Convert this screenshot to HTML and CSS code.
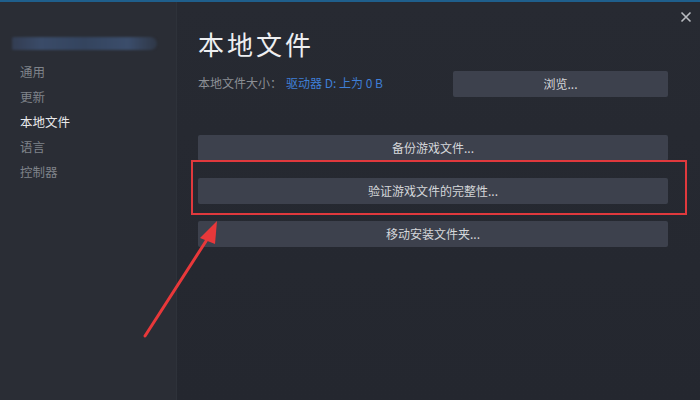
FILE: index.html
```html
<!DOCTYPE html>
<html>
<head>
<meta charset="utf-8">
<link rel="stylesheet" href="styles.css">
</head>
<body>
<div class="topline"></div>
<div class="window">
  <aside class="sidebar">
    <div class="blurbar"></div>
    <nav class="nav">
      <div class="nav-item">通用</div>
      <div class="nav-item">更新</div>
      <div class="nav-item active">本地文件</div>
      <div class="nav-item">语言</div>
      <div class="nav-item">控制器</div>
    </nav>
  </aside>
  <main class="main">
    <h1 class="title">本地文件</h1>
    <div class="size-row">
      <div class="size-text">本地文件大小：<span class="link">驱动器 D: 上为 0 B</span></div>
      <div class="btn browse">浏览...</div>
    </div>
    <div class="actions">
      <div class="btn">备份游戏文件...</div>
      <div class="highlight"><div class="btn">验证游戏文件的完整性...</div></div>
      <div class="btn">移动安装文件夹...</div>
    </div>
  </main>
  <div class="close">
    <svg width="12" height="12" viewBox="0 0 12 12"><path d="M1.5 1.5 L10.5 10.5 M10.5 1.5 L1.5 10.5" stroke="#b8bbc0" stroke-width="1.6" fill="none"/></svg>
  </div>
  <svg class="arrow" width="90" height="125" viewBox="0 0 90 125">
    <path d="M3 120 L66 22" stroke="#e8383a" stroke-width="3" stroke-linecap="round" fill="none"/>
    <path d="M75 5 L58 22 L73 28 Z" fill="#e8383a"/>
  </svg>
</div>
</body>
</html>
```

FILE: styles.css
```css
html, body {
  margin: 0;
  padding: 0;
  width: 700px;
  height: 400px;
  overflow: hidden;
  background: #252830;
  font-family: "Noto Sans CJK SC", "Noto Sans", sans-serif;
}
.topline {
  height: 2px;
  background: #1f5f8c;
}
.window {
  position: relative;
  display: flex;
  height: 398px;
}
.sidebar {
  width: 177px;
  background: #2a2d35;
  padding-top: 35px;
  box-sizing: border-box;
  border-right: 1px solid #2e323a;
}
.blurbar {
  margin-left: 12px;
  width: 145px;
  height: 13px;
  border-radius: 2px 7px 7px 2px;
  background: linear-gradient(90deg, #333d52 0%, #3a4b68 20%, #34445e 50%, #3b4d6b 80%, #2f3746 100%);
  filter: blur(1px);
}
.nav {
  margin-top: 9px;
  padding-left: 20px;
  display: flex;
  flex-direction: column;
}
.nav-item {
  height: 25px;
  line-height: 25px;
  font-size: 12.5px;
  color: #7f838a;
}
.nav-item.active {
  color: #e8e9eb;
}
.main {
  flex: 1;
  padding-left: 21px;
  padding-right: 32px;
  padding-top: 24px;
  background: linear-gradient(180deg, #272a32 0%, #24272f 100%);
}
.title {
  margin: 0;
  font-size: 26px;
  font-weight: 400;
  color: #eeeff1;
  line-height: 36px;
  letter-spacing: 3px;
}
.size-row {
  margin-top: 9px;
  display: flex;
  justify-content: space-between;
  align-items: flex-start;
}
.size-text {
  font-size: 12px;
  color: #8c8f95;
  line-height: 20px;
  margin-top: 2px;
}
.link {
  color: #3f7fd6;
  margin-left: 4px;
}
.btn {
  height: 26px;
  line-height: 26px;
  background: #3d414d;
  color: #d5d7da;
  font-size: 12px;
  text-align: center;
  border-radius: 2px;
}
.browse {
  width: 215px;
}
.actions {
  margin-top: 38px;
  display: flex;
  flex-direction: column;
}
.highlight {
  margin: -1px -19px 6px -7px;
  padding: 16px 17px 9px 5px;
  border: 2px solid #e0393d;
}
.close {
  position: absolute;
  right: 8px;
  top: 2px;
}
.arrow {
  position: absolute;
  left: 142px;
  top: 214px;
}
```
